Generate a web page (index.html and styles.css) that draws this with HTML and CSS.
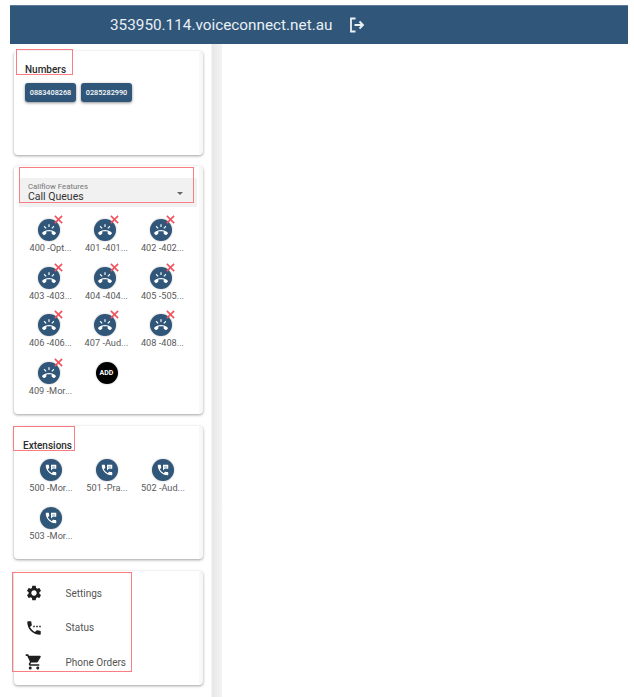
FILE: index.html
```html
<!DOCTYPE html>
<html lang="en">
  <head>
    <meta charset="UTF-8" />
    <meta name="viewport" content="width=device-width, initial-scale=1.0" />
    <title>Dashboard</title>
    <link rel="stylesheet" href="styles.css">
  </head>
  <body>
    <svg class="sprites" width="0" height="0">
      <symbol id="ico-queue" viewBox="0 0 24 24">
        <path d="M23.71 16.67C20.66 13.78 16.54 12 12 12 7.46 12 3.34 13.78.29 16.67c-.18.18-.29.43-.29.71 0 .28.11.53.29.71l2.48 2.48c.18.18.43.29.71.29.27 0 .52-.11.7-.28.79-.74 1.69-1.36 2.66-1.85.33-.16.56-.5.56-.9v-3.1c1.45-.48 3-.73 4.6-.73s3.15.25 4.6.72v3.1c0 .39.23.74.56.9.98.49 1.87 1.12 2.67 1.85.18.18.43.28.7.28.28 0 .53-.11.71-.29l2.48-2.48c.18-.18.29-.43.29-.71 0-.28-.12-.52-.3-.7zM21.16 6.26l-1.41-1.41-3.56 3.55 1.41 1.41s3.45-3.52 3.56-3.55zM13 2h-2v5h2V2zM6.4 9.81L7.81 8.4 4.26 4.84 2.84 6.26c.11.03 3.56 3.55 3.56 3.55z"/>
      </symbol>
      <symbol id="ico-ext" viewBox="0 0 24 24">
        <path d="M20 15.5c-1.25 0-2.45-.2-3.57-.57-.35-.11-.74-.03-1.02.24l-2.2 2.2c-2.83-1.44-5.15-3.75-6.59-6.58l2.2-2.21c.28-.27.36-.66.25-1.01C8.7 6.45 8.5 5.25 8.5 4c0-.55-.45-1-1-1H4c-.55 0-1 .45-1 1 0 9.39 7.61 17 17 17 .55 0 1-.45 1-1v-3.5c0-.55-.45-1-1-1zM12 3v10l3-3h6V3h-9z"/>
        <path class="bubble-lines" d="M14 5h5v1.2h-5zM14 7.6h5v1.2h-5z"/>
      </symbol>
      <symbol id="ico-x" viewBox="0 0 10 10">
        <path d="M1 1l8 8M9 1l-8 8" fill="none" stroke="currentColor" stroke-width="1.8"/>
      </symbol>
    </svg>

    <div class="app">
      <header class="topbar">
        <span class="domain">353950.114.voiceconnect.net.au</span>
        <svg class="logout" viewBox="0 0 16 16">
          <path d="M6.5 1.5H2v13h4.5M5.5 8H14M10.5 4.5L14 8l-3.5 3.5" fill="none" stroke="currentColor" stroke-width="1.8"/>
        </svg>
      </header>

      <div class="layout">
        <aside class="sidebar">
          <section class="card card-numbers">
            <h3 class="card-title">Numbers</h3>
            <div class="numbers">
              <button class="num-btn">0883408268</button>
              <button class="num-btn">0285282990</button>
            </div>
            <div class="mark mark-numbers"></div>
          </section>

          <section class="card card-callflow">
            <div class="select">
              <div class="select-text">
                <span class="select-label">Callflow Features</span>
                <span class="select-value">Call Queues</span>
              </div>
              <span class="select-arrow"></span>
            </div>
            <div class="grid grid-queues">
              <div class="item"><span class="circle"><svg><use href="#ico-queue"/></svg><svg class="del"><use href="#ico-x"/></svg></span><span class="item-name">400 -Opt...</span></div>
              <div class="item"><span class="circle"><svg><use href="#ico-queue"/></svg><svg class="del"><use href="#ico-x"/></svg></span><span class="item-name">401 -401...</span></div>
              <div class="item"><span class="circle"><svg><use href="#ico-queue"/></svg><svg class="del"><use href="#ico-x"/></svg></span><span class="item-name">402 -402...</span></div>
              <div class="item"><span class="circle"><svg><use href="#ico-queue"/></svg><svg class="del"><use href="#ico-x"/></svg></span><span class="item-name">403 -403...</span></div>
              <div class="item"><span class="circle"><svg><use href="#ico-queue"/></svg><svg class="del"><use href="#ico-x"/></svg></span><span class="item-name">404 -404...</span></div>
              <div class="item"><span class="circle"><svg><use href="#ico-queue"/></svg><svg class="del"><use href="#ico-x"/></svg></span><span class="item-name">405 -505...</span></div>
              <div class="item"><span class="circle"><svg><use href="#ico-queue"/></svg><svg class="del"><use href="#ico-x"/></svg></span><span class="item-name">406 -406...</span></div>
              <div class="item"><span class="circle"><svg><use href="#ico-queue"/></svg><svg class="del"><use href="#ico-x"/></svg></span><span class="item-name">407 -Aud...</span></div>
              <div class="item"><span class="circle"><svg><use href="#ico-queue"/></svg><svg class="del"><use href="#ico-x"/></svg></span><span class="item-name">408 -408...</span></div>
              <div class="item"><span class="circle"><svg><use href="#ico-queue"/></svg><svg class="del"><use href="#ico-x"/></svg></span><span class="item-name">409 -Mor...</span></div>
              <div class="item"><span class="circle circle-add">ADD</span></div>
            </div>
            <div class="mark mark-callflow"></div>
          </section>

          <section class="card card-ext">
            <h3 class="card-title">Extensions</h3>
            <div class="grid grid-ext">
              <div class="item"><span class="circle"><svg><use href="#ico-ext"/></svg></span><span class="item-name">500 -Mor...</span></div>
              <div class="item"><span class="circle"><svg><use href="#ico-ext"/></svg></span><span class="item-name">501 -Pra...</span></div>
              <div class="item"><span class="circle"><svg><use href="#ico-ext"/></svg></span><span class="item-name">502 -Aud...</span></div>
              <div class="item"><span class="circle"><svg><use href="#ico-ext"/></svg></span><span class="item-name">503 -Mor...</span></div>
            </div>
            <div class="mark mark-ext"></div>
          </section>

          <section class="card card-menu">
            <div class="menu-row">
              <svg class="menu-icon" viewBox="0 0 24 24"><path d="M19.14 12.94c.04-.3.06-.61.06-.94 0-.32-.02-.64-.07-.94l2.03-1.58c.18-.14.23-.41.12-.61l-1.92-3.32c-.12-.22-.37-.29-.59-.22l-2.39.96c-.5-.38-1.03-.7-1.62-.94l-.36-2.54c-.04-.24-.24-.41-.48-.41h-3.84c-.24 0-.43.17-.47.41l-.36 2.54c-.59.24-1.13.57-1.62.94l-2.39-.96c-.22-.08-.47 0-.59.22L2.74 8.87c-.12.21-.08.47.12.61l2.03 1.58c-.05.3-.09.63-.09.94s.02.64.07.94l-2.03 1.58c-.18.14-.23.41-.12.61l1.92 3.32c.12.22.37.29.59.22l2.39-.96c.5.38 1.03.7 1.62.94l.36 2.54c.05.24.24.41.48.41h3.84c.24 0 .44-.17.47-.41l.36-2.54c.59-.24 1.13-.56 1.62-.94l2.39.96c.22.08.47 0 .59-.22l1.92-3.32c.12-.22.07-.47-.12-.61l-2.01-1.58zM12 15.6c-1.98 0-3.6-1.62-3.6-3.6s1.62-3.6 3.6-3.6 3.6 1.62 3.6 3.6-1.62 3.6-3.6 3.6z"/></svg>
              <span class="menu-text">Settings</span>
            </div>
            <div class="menu-row">
              <svg class="menu-icon" viewBox="0 0 24 24"><path d="M13 9h-2v2h2V9zm4 0h-2v2h2V9zm3 6.5c-1.25 0-2.45-.2-3.57-.57-.35-.11-.74-.03-1.02.24l-2.2 2.2c-2.83-1.44-5.15-3.75-6.59-6.58l2.2-2.21c.28-.27.36-.66.25-1.01C8.7 6.45 8.5 5.25 8.5 4c0-.55-.45-1-1-1H4c-.55 0-1 .45-1 1 0 9.39 7.61 17 17 17 .55 0 1-.45 1-1v-3.5c0-.55-.45-1-1-1zM19 9v2h2V9h-2z"/></svg>
              <span class="menu-text">Status</span>
            </div>
            <div class="menu-row">
              <svg class="menu-icon" viewBox="0 0 24 24"><path d="M7 18c-1.1 0-1.99.9-1.99 2S5.9 22 7 22s2-.9 2-2-.9-2-2-2zM1 2v2h2l3.6 7.59-1.35 2.45c-.16.28-.25.61-.25.96 0 1.1.9 2 2 2h12v-2H7.42c-.14 0-.25-.11-.25-.25l.03-.12.9-1.83h7.45c.75 0 1.41-.41 1.75-1.03l3.58-6.49c.08-.14.12-.31.12-.48 0-.55-.45-1-1-1H5.21l-.94-2H1zm16 16c-1.1 0-1.99.9-1.99 2s.89 2 1.99 2 2-.9 2-2-.9-2-2-2z"/></svg>
              <span class="menu-text">Phone Orders</span>
            </div>
            <div class="mark mark-menu"></div>
          </section>
        </aside>
        <div class="divider"></div>
        <main class="content"></main>
      </div>
    </div>
  </body>
</html>
```

FILE: styles.css
```css
* {
  box-sizing: border-box;
  margin: 0;
  padding: 0;
}

html,
body {
  height: 100%;
  overflow: hidden;
}

body {
  background: #fff;
  font-family: Roboto, "Liberation Sans", sans-serif;
  color: #333;
}

.sprites {
  position: absolute;
}

.app {
  display: flex;
  flex-direction: column;
  height: 100%;
  padding: 5px 6px 0 10px;
}

.topbar {
  display: flex;
  align-items: center;
  flex: none;
  height: 39px;
  padding-left: 100px;
  background: #305679;
  border-top: 1px solid #5f7d98;
  color: #e9eff4;
}

.domain {
  font-size: 15.3px;
  line-height: 38px;
}

.logout {
  width: 16px;
  height: 16px;
  margin-left: 17px;
  color: #eef2f5;
}

.layout {
  display: flex;
  flex: 1;
  min-height: 0;
}

.sidebar {
  flex: none;
  width: 201px;
  padding: 7px 8px 0 4px;
}

.divider {
  flex: none;
  width: 11px;
  background: linear-gradient(to right, #e7e7e7, #f3f3f3);
  border-left: 1px solid #f4f4f4;
}

.content {
  flex: 1;
}

.card {
  position: relative;
  margin-bottom: 12px;
  background: #fff;
  border-right: 4px solid #f8f8f8;
  border-radius: 4px;
  box-shadow: 0 1px 3px rgba(0, 0, 0, 0.38);
}

.card-numbers {
  height: 104px;
  margin-bottom: 11px;
  padding: 13px 0 0 11px;
}

.card-callflow {
  height: 248px;
  padding-top: 12px;
}

.card-ext {
  height: 133px;
  padding: 14px 0 0 9px;
}

.card-menu {
  height: 114px;
  padding-top: 5px;
}

.card-title {
  font-size: 10px;
  font-weight: 500;
  line-height: 12px;
  color: #2b2b2b;
}

.numbers {
  display: flex;
  gap: 5px;
  margin-top: 7px;
}

.num-btn {
  width: 51px;
  height: 19px;
  background: #305679;
  border: 0;
  border-radius: 3px;
  box-shadow: 0 1px 3px rgba(0, 0, 0, 0.45);
  color: #fff;
  font-family: inherit;
  font-size: 7.3px;
  font-weight: 500;
}

.select {
  display: flex;
  align-items: center;
  justify-content: space-between;
  width: 178px;
  height: 29px;
  margin-left: 5px;
  padding: 0 14px 2px 9px;
  background: #f1f1f1;
}

.select-text {
  display: flex;
  flex-direction: column;
}

.select-label {
  font-size: 7.8px;
  line-height: 9px;
  color: #777;
}

.select-value {
  font-size: 10.5px;
  line-height: 11px;
  color: #333;
}

.select-arrow {
  width: 0;
  height: 0;
  margin-top: 3px;
  border-left: 3.5px solid transparent;
  border-right: 3.5px solid transparent;
  border-top: 3.5px solid #666;
}

.grid {
  display: grid;
  grid-template-columns: repeat(3, 56px);
  grid-auto-rows: 47.5px;
}

.grid-queues {
  margin: 12px 0 0 7px;
}

.grid-queues .item-name {
  margin-left: 3px;
}

.grid-ext {
  margin-top: 7px;
}

.item {
  display: flex;
  flex-direction: column;
  align-items: center;
}

.circle {
  position: relative;
  display: flex;
  align-items: center;
  justify-content: center;
  width: 22px;
  height: 22px;
  background: #305679;
  border-radius: 50%;
  box-shadow: 0 0 2px rgba(0, 0, 0, 0.3);
  color: #fff;
  fill: currentColor;
}

.circle svg {
  width: 14px;
  height: 14px;
}

.circle .del {
  position: absolute;
  top: -4px;
  right: -3px;
  width: 9px;
  height: 9px;
  color: #f2525c;
}

.circle-add {
  margin-left: 3px;
  background: #000;
  font-size: 7px;
  font-weight: 700;
}

.bubble-lines {
  fill: #7f97ad;
}

.item-name {
  margin-top: 1px;
  font-size: 9.2px;
  line-height: 12px;
  color: #5a5a5a;
  white-space: nowrap;
}

.menu-row {
  display: flex;
  align-items: center;
  height: 34.5px;
  padding-left: 11px;
}

.menu-icon {
  flex: none;
  width: 18px;
  height: 18px;
  fill: #1f1f1f;
}

.menu-text {
  margin-left: 22.5px;
  font-size: 10px;
  color: #555;
}

/* rode markeringer oven paa kortene */
.mark {
  position: absolute;
  border: 1.5px solid #fa7d84;
  pointer-events: none;
}

.mark-numbers {
  top: -2px;
  left: 2px;
  width: 57px;
  height: 26px;
}

.mark-callflow {
  top: 1px;
  left: 5px;
  width: 175px;
  height: 36px;
}

.mark-ext {
  top: 0;
  left: -1px;
  width: 62px;
  height: 25px;
}

.mark-menu {
  top: 1px;
  left: -2px;
  width: 120px;
  height: 100px;
}
```
